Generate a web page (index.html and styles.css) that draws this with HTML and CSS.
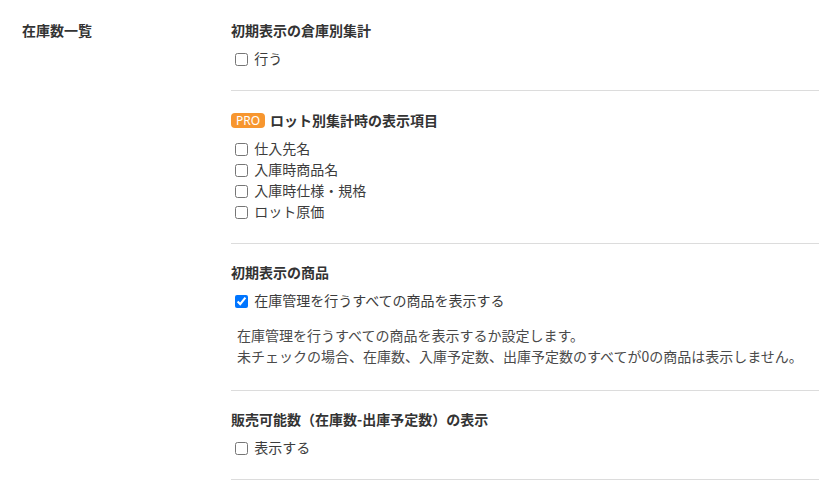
FILE: index.html
```html
<!DOCTYPE html>
<html lang="ja">
<head>
    <meta charset="UTF-8">
    <title>在庫数一覧</title>
    <link rel="stylesheet" href="styles.css">
</head>
<body>
    <div class="setting-row">
        <div class="setting-label">在庫数一覧</div>
        <div class="setting-body">
            <div class="section">
                <div class="section-title">初期表示の倉庫別集計</div>
                <label class="check"><input type="checkbox"> 行う</label>
            </div>

            <div class="section">
                <div class="section-title has-badge"><span class="badge">PRO</span>ロット別集計時の表示項目</div>
                <label class="check"><input type="checkbox"> 仕入先名</label>
                <label class="check"><input type="checkbox"> 入庫時商品名</label>
                <label class="check"><input type="checkbox"> 入庫時仕様・規格</label>
                <label class="check"><input type="checkbox"> ロット原価</label>
            </div>

            <div class="section">
                <div class="section-title">初期表示の商品</div>
                <label class="check"><input type="checkbox" checked> 在庫管理を行うすべての商品を表示する</label>
                <p class="note">
                    在庫管理を行うすべての商品を表示するか設定します。<br>
                    未チェックの場合、在庫数、入庫予定数、出庫予定数のすべてが0の商品は表示しません。
                </p>
            </div>

            <div class="section">
                <div class="section-title">販売可能数（在庫数-出庫予定数）の表示</div>
                <label class="check"><input type="checkbox"> 表示する</label>
            </div>
        </div>
    </div>
</body>
</html>
```

FILE: styles.css
```css
* {
    box-sizing: border-box;
}

body {
    margin: 0;
    background: #fff;
    color: #333;
    font-family: "Noto Sans CJK JP", "Noto Sans", sans-serif;
    font-size: 14px;
    line-height: 21px;
}

.setting-row {
    display: grid;
    grid-template-columns: 209px 1fr;
    padding-left: 22px;
}

.setting-label {
    font-weight: bold;
    padding-top: 20px;
}

.section {
    padding: 18px 0 21px;
    border-bottom: 1px solid #dcdcdc;
}

.section:first-child {
    padding-top: 20px;
}

.section-title {
    font-weight: bold;
    margin-bottom: 7px;
    display: flex;
    align-items: center;
}

.section-title.has-badge {
    height: 22px;
    margin-bottom: 7px;
}

.badge {
    display: inline-block;
    background: #f7962f;
    color: #fff;
    font-weight: normal;
    font-size: 12px;
    line-height: 15px;
    height: 15px;
    padding: 0 5px;
    border-radius: 4px;
    margin: 0 5px 0 0;
    font-family: "Noto Sans", sans-serif;
}

.check {
    display: block;
    color: #3c3c3c;
}

.check input {
    vertical-align: -2px;
}

.note {
    margin: 14px 0 2px 6px;
    color: #4a4a4a;
}
```
